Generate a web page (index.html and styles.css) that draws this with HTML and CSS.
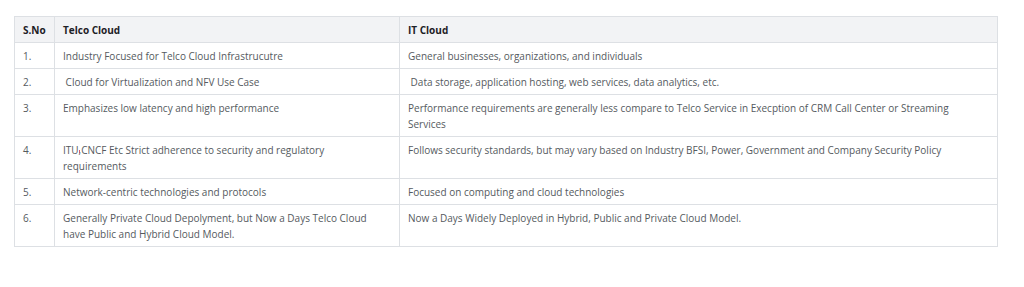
FILE: index.html
```html
<!DOCTYPE html>
<html>
<head>
<meta charset="utf-8">
<link rel="stylesheet" href="styles.css">
</head>
<body>
<table class="cmp">
  <colgroup>
    <col class="c-no">
    <col class="c-telco">
    <col class="c-it">
  </colgroup>
  <thead>
    <tr><th>S.No</th><th>Telco Cloud</th><th>IT Cloud</th></tr>
  </thead>
  <tbody>
    <tr><td>1.</td><td>Industry Focused for Telco Cloud Infrastrucutre</td><td>General businesses, organizations, and individuals</td></tr>
    <tr><td>2.</td><td>&nbsp;Cloud for Virtualization and NFV Use Case</td><td>&nbsp;Data storage, application hosting, web services, data analytics, etc.</td></tr>
    <tr><td>3.</td><td>Emphasizes low latency and high performance</td><td>Performance requirements are generally less compare to Telco Service in Execption of CRM Call Center or Streaming Services</td></tr>
    <tr><td>4.</td><td class="spell">ITU,CNCF Etc Strict adherence to security and regulatory requirements</td><td>Follows security standards, but may vary based on Industry BFSI, Power, Government and Company Security Policy</td></tr>
    <tr><td>5.</td><td>Network-centric technologies and protocols</td><td>Focused on computing and cloud technologies</td></tr>
    <tr><td>6.</td><td>Generally Private Cloud Depolyment, but Now a Days Telco Cloud have Public and Hybrid Cloud Model.</td><td>Now a Days Widely Deployed in Hybrid, Public and Private Cloud Model.</td></tr>
  </tbody>
</table>
</body>
</html>
```
FILE: styles.css
```css
html, body {
  margin: 0;
  padding: 0;
  background: #ffffff;
}
body {
  padding: 16px 0 0 14px;
  font-family: "Open Sans", "Noto Sans", sans-serif;
}
.cmp {
  border-collapse: collapse;
  width: 983px;
  table-layout: fixed;
  font-size: 10px;
  color: #555a60;
}
.c-no { width: 40px; }
.c-telco { width: 345px; }
.c-it { width: 598px; }
.cmp th, .cmp td {
  border: 1px solid #dde0e4;
  padding: 5px 14px 4px 8px;
  line-height: 16px;
  text-align: left;
  vertical-align: top;
}
.cmp th {
  background: #f2f3f5;
  color: #1d2126;
  font-weight: 700;
}
.cmp td.spell {
  background-image: linear-gradient(#e0566a, #e0566a);
  background-repeat: no-repeat;
  background-size: 1px 3px;
  background-position: 24px 13px;
}
```
